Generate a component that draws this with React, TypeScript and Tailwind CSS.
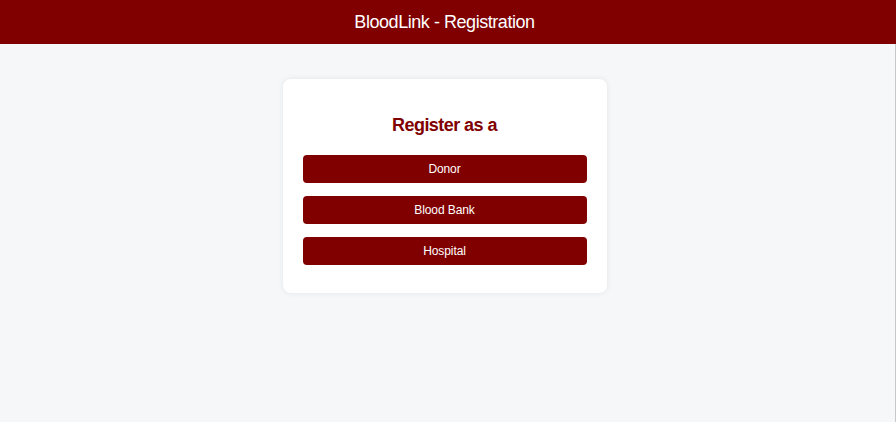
import React from "react";

const roles = ["Donor", "Blood Bank", "Hospital"];

const App: React.FC = () => {
  return (
    <div className="min-h-screen flex flex-col bg-[#f6f7f9] font-['Liberation_Sans',Arial,sans-serif]">
      <header className="h-[44px] bg-[#800000] flex items-center justify-center pr-[7px] pb-[1px]">
        <h1 className="text-white text-[18px] tracking-[-0.45px] leading-none">
          BloodLink - Registration
        </h1>
      </header>
      <main className="flex-1 flex justify-center items-start pr-[6px] pt-[35px] border-r border-[#c8c8c8]">
        <div className="w-[324px] bg-white rounded-lg shadow-[0_0_6px_rgba(0,0,0,0.08)] px-5 pt-8 pb-[28px]">
          <h2 className="text-center text-[18px] leading-7 font-bold tracking-[-0.55px] text-[#800000] mb-4">
            Register as a
          </h2>
          <div className="flex flex-col gap-[13.5px]">
            {roles.map((role) => (
              <button
                key={role}
                className="h-[27.5px] w-full rounded bg-[#800000] text-white text-[12px] tracking-[-0.1px]"
              >
                {role}
              </button>
            ))}
          </div>
        </div>
      </main>
    </div>
  );
};

export default App;
